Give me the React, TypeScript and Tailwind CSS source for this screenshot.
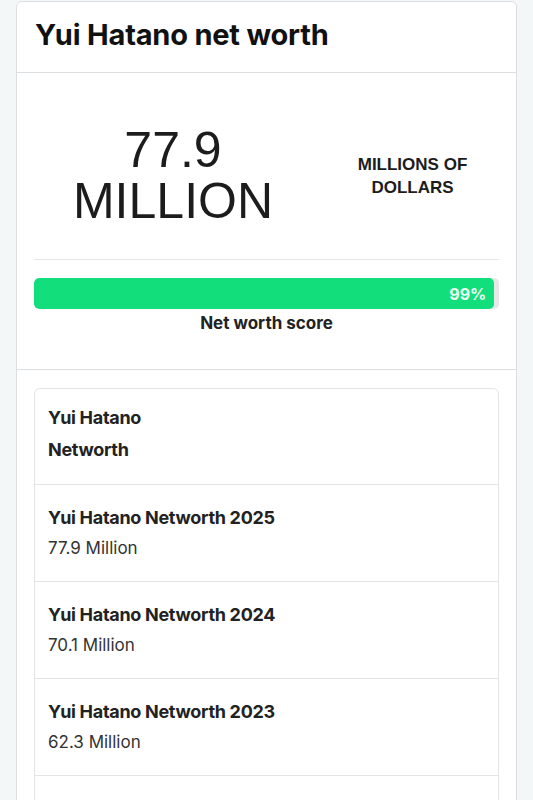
const years = [
  { year: 2025, value: '77.9 Million' },
  { year: 2024, value: '70.1 Million' },
  { year: 2023, value: '62.3 Million' },
  { year: 2022, value: '54.5 Million' },
  { year: 2021, value: '46.7 Million' },
]

export default function App() {
  return (
    <div className="min-h-screen bg-[#f4f7f7] px-4 pt-[1px] font-['Inter',sans-serif]">
      <div className="bg-white border border-[#dcdfe1] rounded-t-md">
        {/* header */}
        <div className="h-[71px] border-b border-[#dcdfe1] px-[18px] flex items-center">
          <h1 className="text-[29px] font-bold text-[#111] tracking-[-0.2px] pb-[4px]">Yui Hatano net worth</h1>
        </div>

        {/* big number */}
        <div className="px-[17px] border-b border-[#dcdfe1]">
          <div className="grid grid-cols-[278px_1fr] items-center pt-[52px] pb-[32px] border-b border-[#e4e6e8] font-['Liberation_Sans',Arial,sans-serif] text-[#1c1c1c]">
            <div className="text-center text-[50px] leading-[51px]">
              <div>77.9</div>
              <div>MILLION</div>
            </div>
            <div className="pl-[14px] text-center text-[17px] leading-[23.5px] font-bold">
              <div>MILLIONS OF</div>
              <div>DOLLARS</div>
            </div>
          </div>

          <div className="pt-[18px] pb-[32px]">
            <div className="h-[31px] bg-[#e8e8e8] rounded-[5px] overflow-hidden">
              <div className="h-full w-[99%] bg-[#12de7c] rounded-[5px] flex items-center justify-end pr-[8px]">
                <span className="text-[16px] font-bold text-[#eafff1]">99%</span>
              </div>
            </div>
            <div className="text-center text-[17px] font-bold text-[#222] mt-[2px]">Net worth score</div>
          </div>
        </div>

        {/* list */}
        <div className="px-[17px] pt-[18px] pb-4">
          <div className="border border-[#e2e4e6] rounded-md">
            <div className="px-[13px] pt-[13px] pb-[18px] border-b border-[#e2e4e6] text-[18px] tracking-[-0.3px] font-bold text-[#222] leading-[32px]">
              <div>Yui Hatano</div>
              <div>Networth</div>
            </div>
            {years.map((y) => (
              <div key={y.year} className="px-[13px] py-[17px] border-b border-[#e2e4e6] last:border-b-0 leading-[31px]">
                <div className="text-[18px] tracking-[-0.3px] font-bold text-[#222]">Yui Hatano Networth {y.year}</div>
                <div className="text-[17px] text-[#333]">{y.value}</div>
              </div>
            ))}
          </div>
        </div>
      </div>
    </div>
  )
}
